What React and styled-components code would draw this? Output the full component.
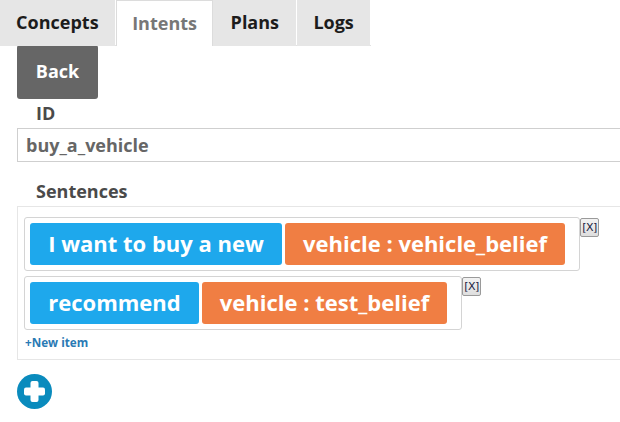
import React from "react";
import styled, { createGlobalStyle } from "styled-components";

const Global = createGlobalStyle`
  html, body { margin: 0; padding: 0; background: #fff; }
  body { font-family: "Open Sans", "Liberation Sans", sans-serif; overflow: hidden; }
`;

const TabBar = styled.div`
  display: flex;
  height: 46px;
  width: 371px;
  border-bottom: 1px solid #e2e2e2;
  box-sizing: border-box;
`;

const Tab = styled.div`
  display: flex;
  align-items: center;
  justify-content: center;
  width: ${(p) => p.w}px;
  height: 46px;
  box-sizing: border-box;
  font-size: 18px;
  font-weight: 700;
  padding-bottom: 2px;
  background: ${(p) => (p.active ? "#fff" : "#e6e6e6")};
  color: ${(p) => (p.active ? "#777" : "#1c1c1c")};
  border: ${(p) => (p.active ? "1px solid #dcdcdc" : "none")};
  border-bottom: none;
  margin-right: ${(p) => (p.active ? 0 : 1)}px;
`;

const Content = styled.div`
  padding-left: 17px;
  display: flex;
  flex-direction: column;
  align-items: flex-start;
  overflow: hidden;
`;

const BackButton = styled.button`
  margin-top: -1px;
  width: 81px;
  height: 54px;
  background: #666;
  color: #fff;
  border: none;
  border-radius: 3px;
  font-family: inherit;
  font-size: 18px;
  font-weight: 700;
  padding: 0 0 2px;
`;

const Label = styled.div`
  font-size: 18px;
  font-weight: 700;
  color: #4a4a4a;
  padding-left: 19px;
  margin-top: ${(p) => p.mt}px;
  line-height: 22px;
`;

const IdInput = styled.div`
  margin-top: 4px;
  width: 640px;
  height: 34px;
  box-sizing: border-box;
  border: 1px solid #cfcfcf;
  padding-left: 8px;
  display: flex;
  align-items: center;
  font-size: 18px;
  font-weight: 700;
  color: #666;
`;

const SentenceBox = styled.div`
  margin-top: 4px;
  width: 640px;
  height: 154px;
  box-sizing: border-box;
  border: 1px solid #e6e6e6;
  padding: 10px 0 0 6px;
  display: flex;
  flex-direction: column;
  align-items: flex-start;
  gap: 5px;
`;

const RowWrap = styled.div`
  display: flex;
  align-items: flex-start;
`;

const Row = styled.div`
  display: flex;
  gap: 3px;
  padding: 5px 14px 5px 5px;
  border: 1px solid #d4d4d4;
  border-radius: 3px;
  width: ${(p) => p.w}px;
  box-sizing: border-box;
`;

const Chip = styled.div`
  height: 42px;
  display: flex;
  align-items: center;
  justify-content: center;
  box-sizing: border-box;
  width: ${(p) => p.w}px;
  border-radius: 3px;
  background: ${(p) => (p.kind === "entity" ? "#f07e43" : "#1ea8ec")};
  color: #fff;
  font-size: 22px;
  font-weight: 700;
  padding-bottom: 2px;
  white-space: nowrap;
`;

const RemoveButton = styled.div`
  margin-top: 1px;
  width: 19px;
  height: 19px;
  box-sizing: border-box;
  border: 1px solid #9a9a9a;
  border-radius: 2px;
  background: linear-gradient(#f2f2f2, #dedede);
  font-family: "DejaVu Sans", "Liberation Sans", sans-serif;
  font-size: 11px;
  color: #1a1a40;
  display: flex;
  align-items: center;
  justify-content: center;
  letter-spacing: -0.5px;
`;

const NewItem = styled.div`
  margin-top: -1px;
  padding-left: 1px;
  font-size: 11.7px;
  line-height: 16px;
  font-weight: 700;
  color: #2a7ab4;
`;

const AddCircle = styled.div`
  margin-top: 14px;
  width: 35px;
  height: 35px;
`;

const sentences = [
  { w: 556, chips: [{ t: "I want to buy a new", w: 252 }, { t: "vehicle : vehicle_belief", w: 280, kind: "entity" }] },
  { w: 438, chips: [{ t: "recommend", w: 169 }, { t: "vehicle : test_belief", w: 245, kind: "entity" }] },
];

export default function App() {
  return (
    <>
      <Global />
      <TabBar>
        <Tab w={115}>Concepts</Tab>
        <Tab w={98} active>Intents</Tab>
        <Tab w={83}>Plans</Tab>
        <Tab w={73}>Logs</Tab>
      </TabBar>
      <Content>
        <BackButton>Back</BackButton>
        <Label mt={3}>ID</Label>
        <IdInput>buy_a_vehicle</IdInput>
        <Label mt={18}>Sentences</Label>
        <SentenceBox>
          {sentences.map((s, i) => (
            <RowWrap key={i}>
              <Row w={s.w}>
                {s.chips.map((c, j) => (
                  <Chip key={j} w={c.w} kind={c.kind}>{c.t}</Chip>
                ))}
              </Row>
              <RemoveButton>[X]</RemoveButton>
            </RowWrap>
          ))}
          <NewItem>+New item</NewItem>
        </SentenceBox>
        <AddCircle>
          <svg width="35" height="35" viewBox="0 0 35 35">
            <circle cx="17.5" cy="17.5" r="17.5" fill="#0a8bbd" />
            <rect x="7" y="13.5" width="21" height="8" rx="2" fill="#fff" />
            <rect x="13.5" y="7" width="8" height="21" rx="2" fill="#fff" />
          </svg>
        </AddCircle>
      </Content>
    </>
  );
}
